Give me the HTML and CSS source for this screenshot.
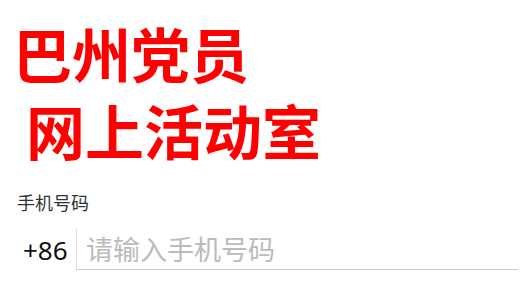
FILE: index.html
```html
<!DOCTYPE html>
<html lang="zh-CN">
<head>
  <meta charset="UTF-8">
  <meta name="viewport" content="width=device-width, initial-scale=1.0">
  <title>巴州党员网上活动室</title>
  <link rel="stylesheet" href="styles.css">
</head>
<body>

  <main>
    <h1 class="title">
      <span class="title-line">巴州党员</span>
      <span class="title-line indent">网上活动室</span>
    </h1>

    <form class="login">
      <label class="label" for="phone">手机号码</label>
      <div class="phone-row">
        <span class="prefix">+86</span>
        <input class="phone" id="phone" type="tel" placeholder="请输入手机号码">
      </div>
    </form>
  </main>

</body>
</html>
```

FILE: styles.css
```css
body {
  margin: 0;
  background-color: white;
  font-family: "Noto Sans", "Noto Sans CJK SC", sans-serif;
}
main {
  padding: 14px 6px 0 17px;
}
.title {
  margin: 0 0 0 -4px;
  color: #f00;
  font-family: "Noto Sans CJK SC", sans-serif;
  font-size: 59px;
  font-weight: bold;
  line-height: 77px;
}
.title-line {
  display: block;
}
.indent {
  padding-left: 13px;
}

.login {
  margin-top: 22px;
}
.label {
  display: block;
  font-family: "Noto Sans CJK SC", sans-serif;
  font-size: 18px;
  line-height: 24px;
  color: #333;
}
.phone-row {
  display: flex;
  align-items: center;
  margin-top: 15px;
}
.prefix {
  width: 59px;
  padding-left: 6px;
  box-sizing: border-box;
  font-size: 26px;
  color: #111;
}
.phone {
  flex: 1;
  height: 38px;
  margin: 0;
  padding: 0 0 2px 9px;
  border: none;
  border-left: 1px solid #ddd;
  border-bottom: 1px solid #ccc;
  outline: none;
  font-family: "Noto Sans CJK SC", sans-serif;
  font-size: 27px;
  color: #111;
  background: transparent;
}
.phone::placeholder {
  color: #bbb;
}
```
